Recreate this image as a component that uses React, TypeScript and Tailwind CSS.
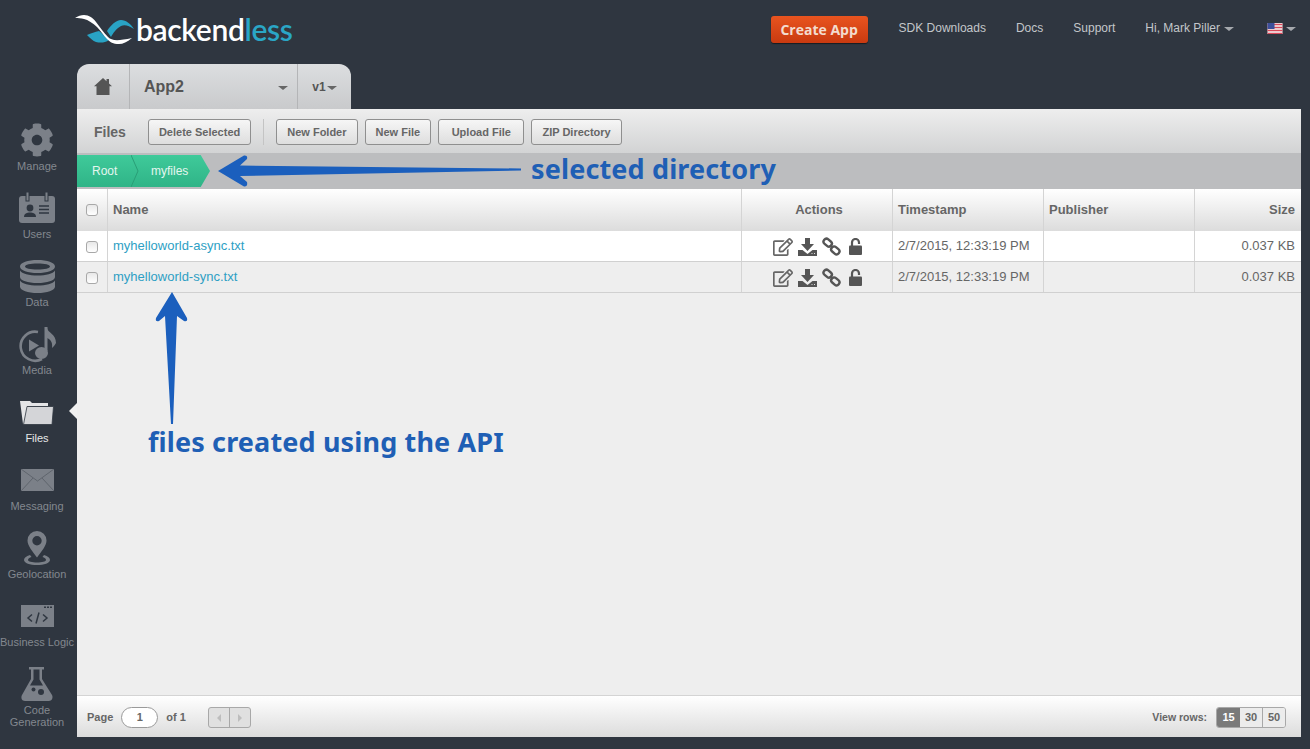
import React from "react";
import { FaCog, FaRegEdit } from "react-icons/fa";

const Caret = ({ className = "" }: { className?: string }) => (
  <span className={"inline-block w-0 h-0 border-x-[5px] border-x-transparent border-t-[4.5px] " + className} />
);

const iconColor = "#7b8088";
const bgDark = "#2f3640";

function UsersIcon() {
  return (
    <svg width="36" height="32" viewBox="0 0 36 32">
      <rect x="0" y="4" width="36" height="27" rx="3" fill={iconColor} />
      <rect x="7" y="0" width="3" height="9" fill={iconColor} stroke={bgDark} strokeWidth="1" />
      <rect x="26" y="0" width="3" height="9" fill={iconColor} stroke={bgDark} strokeWidth="1" />
      <circle cx="11" cy="16" r="3.4" fill={bgDark} />
      <path d="M5 25c0-3.500 3-4.500 6-4.500s6 1 6 4.500z" fill={bgDark} />
      <path d="M20 14h10M20 17.500h10M20 21h10" stroke={bgDark} strokeWidth="1.500" />
    </svg>
  );
}

function DataIcon() {
  return (
    <svg width="35" height="33" viewBox="0 0 35 33">
      <path fillRule="evenodd" d="M17.500 0C27 0 35 2.500 35 6.500S27 13 17.500 13 0 10.500 0 6.500 8 0 17.500 0zm0 3.500C10 3.500 5 4.800 5 6.500s5 3 12.500 3S30 8.200 30 6.500s-5-3-12.500-3z" fill={iconColor} />
      <path d="M0 10.500C2 14 9 15.500 17.500 15.500S33 14 35 10.500V17c0 3.500-8 6-17.500 6S0 20.500 0 17z" fill={iconColor} />
      <path d="M0 20.500C2 24 9 25.500 17.500 25.500S33 24 35 20.500V26.500c0 4-8 6.500-17.500 6.500S0 30.500 0 26.500z" fill={iconColor} />
    </svg>
  );
}

function MediaIcon() {
  return (
    <svg width="38" height="37" viewBox="0 0 38 37" fill="none">
      <path d="M20 6A14.500 14.500 0 1 0 24 33" stroke={iconColor} strokeWidth="2.600" />
      <path d="M11 13.500v12l10-6z" fill={iconColor} />
      <path d="M28 1v24" stroke={iconColor} strokeWidth="3" />
      <ellipse cx="23.500" cy="27" rx="6.500" ry="6" fill={iconColor} />
      <path d="M29 2c1 5 9 6 9 15-1 2-2 3-4 5 1-6-2-9-5-10z" fill={iconColor} />
    </svg>
  );
}

function FolderIcon() {
  return (
    <svg width="34" height="25" viewBox="0 0 34 25">
      <path d="M0 1h10l2 2h16v3H7.500L5 24H3z" fill="#e4e5e7" />
      <path d="M7 6.500h26.500L32 24.500H3.500z" fill="#d4d5d8" stroke={bgDark} strokeWidth="0.800" />
    </svg>
  );
}

function MailIcon() {
  return (
    <svg width="33" height="22" viewBox="0 0 33 22">
      <rect width="33" height="22" fill={iconColor} />
      <path d="M0 0l16.500 12L33 0M0 22l12-13M33 22L21 9" fill="none" stroke="#5b616a" strokeWidth="0.900" />
    </svg>
  );
}

function PinIcon() {
  return (
    <svg width="26" height="34" viewBox="0 0 26 34">
      <path fillRule="evenodd" d="M13 0a9.500 9.500 0 0 1 9.500 9.500c0 5-5 11-9.500 17-4.500-6-9.500-12-9.500-17A9.500 9.500 0 0 1 13 0zm0 5a4.700 4.700 0 1 0 0 9.400A4.700 4.700 0 0 0 13 5z" fill={iconColor} />
      <path d="M6 24c-4 1-6 3-6 5 0 3 6 5 13 5s13-2 13-5c0-2-2-4-6-5l-1.500 2c2 .5 3.500 1.500 3.500 3 0 1.500-4 2.500-9 2.500s-9-1-9-2.500c0-1.500 1.500-2.500 3.500-3z" fill={iconColor} />
    </svg>
  );
}

function LogicIcon() {
  return (
    <svg width="33" height="22" viewBox="0 0 33 22">
      <rect width="33" height="22" fill={iconColor} />
      <rect x="23" y="1.500" width="2" height="1.500" fill={bgDark} />
      <rect x="26" y="1.500" width="2" height="1.500" fill={bgDark} />
      <rect x="29" y="1.500" width="2" height="1.500" fill={bgDark} />
      <path d="M11 9.500l-4 3.500 4 3.500M22 9.500l4 3.500-4 3.500M18 7.500l-3 11" fill="none" stroke={bgDark} strokeWidth="1.500" />
    </svg>
  );
}

function FlaskIcon() {
  return (
    <svg width="34" height="34" viewBox="0 0 34 34">
      <path fillRule="evenodd" d="M9 0h15v2.500h-2V12l10 16c1.500 3-.5 6-3 6H5c-3 0-4.500-3-3-6l9-16V2.500H9zM13.500 2.500v10l-3.500 6h13l-3.500-6v-10z" fill={iconColor} />
      <circle cx="21" cy="25" r="3" fill={bgDark} />
      <circle cx="13.500" cy="22.500" r="2" fill={bgDark} />
    </svg>
  );
}

function HomeIcon() {
  return (
    <svg width="18" height="17" viewBox="0 0 18 17">
      <path d="M9 0l3.500 3.200V1h2.500v4.500L18 8.300h-2.500V17H2.500V8.300H0z" fill="#555" />
    </svg>
  );
}

function DownloadIcon() {
  return (
    <svg width="19" height="18" viewBox="0 0 19 18">
      <path d="M7 0h5v6h4l-6.500 7L3 6h4z" fill="#555" />
      <path d="M0 12h4.500l5 4 5-4H19v6H0z" fill="#555" />
      <path d="M13.500 15.500h1M16 15.500h1" stroke="#ddd" strokeWidth="1" />
    </svg>
  );
}

function ChainIcon() {
  return (
    <svg width="19" height="19" viewBox="0 0 19 19" fill="none" stroke="#555" strokeWidth="2.400">
      <rect x="1.200" y="2.800" width="9" height="5.800" rx="2.900" transform="rotate(40 5.700 5.700)" />
      <rect x="8.800" y="10.400" width="9" height="5.800" rx="2.900" transform="rotate(40 13.300 13.300)" />
      <path d="M8 8l3 3" />
    </svg>
  );
}

function LockIcon() {
  return (
    <svg width="13" height="17" viewBox="0 0 13 17">
      <path d="M3 8V4.500a3.500 3.500 0 0 1 7 0V6" fill="none" stroke="#555" strokeWidth="2.200" />
      <rect x="0" y="7.500" width="13" height="9.500" rx="1" fill="#555" />
    </svg>
  );
}

const navItems: { label: React.ReactNode; icon: React.ReactNode; active?: boolean }[] = [
  { label: "Manage", icon: <FaCog size={34} color={iconColor} /> },
  { label: "Users", icon: <UsersIcon /> },
  { label: "Data", icon: <DataIcon /> },
  { label: "Media", icon: <MediaIcon /> },
  { label: "Files", icon: <FolderIcon />, active: true },
  { label: "Messaging", icon: <MailIcon /> },
  { label: "Geolocation", icon: <PinIcon /> },
  { label: "Business Logic", icon: <LogicIcon /> },
  { label: <>Code<br />Generation</>, icon: <FlaskIcon /> },
];

const rows = [
  { name: "myhelloworld-async.txt", bg: "bg-white" },
  { name: "myhelloworld-sync.txt", bg: "bg-[#eeeeee]" },
];

const gridCols = "grid grid-cols-[31px_634px_151px_151px_151px_1fr]";

function ToolButton({ children, className = "px-[10px]" }: { children: React.ReactNode; className?: string }) {
  return (
    <button className={"h-[26px] rounded-[3px] border border-[#8f8f8f] bg-linear-to-b from-[#f6f6f6] to-[#dedede] text-[11px] font-bold text-[#666] whitespace-nowrap " + className}>
      {children}
    </button>
  );
}

function Checkbox() {
  return <span className="block w-3 h-3 rounded-[3px] border border-[#a8a8a8] bg-linear-to-b from-[#e8e8e8] to-white" />;
}

function HeadCell({ children, className = "" }: { children?: React.ReactNode; className?: string }) {
  return (
    <div className={"flex items-center h-full border-r border-[#d4d4d4] text-[13px] font-bold text-[#666] " + className}>
      {children}
    </div>
  );
}

function Logo() {
  return (
    <div className="flex items-center ml-[75px] mt-[-6px] h-[32px]">
      <svg width="59" height="31" viewBox="0 0 59 31" className="shrink-0">
        <path d="M12 21C16 19 20 18 24 17C27 19 30 23 34 26C30 29 25 29 21 28C18 27 15 24 12 21z" fill="#29a3c4" />
        <path d="M32 17C36 11 41 6 46 6C51 6 56 10 59 15C54 12 50 10 46 12C42 14 38 19 36 23z" fill="#29a3c4" />
        <path d="M0 4C3 2 6 1 9 1C14 1 18 4 21 8C25 13 29 19 33 23C37 27 43 27 57 24C52 28 48 30 44 30C38 30 35 28 32 25C28 21 26 17 22 13C18 9 13 6 9 5C6 4 3 4 0 4z" fill="#ffffff" />
      </svg>
      <span className="text-[30px] leading-none tracking-[-0.35px] font-semibold ml-[2px] [font-family:'Lato',sans-serif]">
        <span className="text-white">backend</span>
        <span className="text-[#2aa6c6]">less</span>
      </span>
    </div>
  );
}

export default function App() {
  return (
    <div className="relative w-[1310px] h-[749px] overflow-hidden bg-[#2f3640] flex flex-col text-[#666] [font-family:'Liberation_Sans',Arial,sans-serif]">
      {/* Header */}
      <header className="h-[64px] shrink-0 flex items-center">
        <Logo />
        <div className="ml-auto flex items-center pr-[14px] mt-[-8px] text-[12px] text-[#c3c6ca]">
          <a className="h-[27px] w-[97px] mt-[2px] flex items-center justify-center rounded-[3px] bg-linear-to-b from-[#e9541f] to-[#c93a10] shadow-[0_1px_1px_rgba(0,0,0,0.5)] text-[14px] font-bold text-[#f3dccf] [font-family:'Open_Sans',sans-serif] mr-[31px]">
            Create App
          </a>
          <span className="mr-[30px]">SDK Downloads</span>
          <span className="mr-[30px]">Docs</span>
          <span className="mr-[30px]">Support</span>
          <span className="mr-[33px] flex items-center gap-[4px]">
            Hi, Mark Piller <Caret className="border-t-[#a6a9ae] mt-[2px]" />
          </span>
          <span className="flex items-center gap-[3px]">
            <svg width="16" height="11" viewBox="0 0 15 11">
              <rect width="15" height="11" fill="#f4f4f4" />
              <path d="M0 1.500h15M0 4.500h15M0 7.500h15M0 10.300h15" stroke="#d8495a" strokeWidth="1.300" />
              <rect width="7" height="6" fill="#3c4f9a" />
            </svg>
            <Caret className="border-t-[#a6a9ae] mt-[2px]" />
          </span>
        </div>
      </header>

      {/* App tabs */}
      <div className="h-[45px] shrink-0 ml-[77px] w-[274px] flex rounded-t-[12px] bg-linear-to-b from-[#dcdee0] to-[#c9cacc] text-[#555]">
        <div className="w-[53px] flex items-center justify-center border-r border-[#b4b5b7]">
          <HomeIcon />
        </div>
        <div className="w-[168px] flex items-center justify-between pl-[14px] pr-[9px] border-r border-[#b4b5b7]">
          <span className="text-[16px] font-bold">App2</span>
          <Caret className="border-t-[#666] mt-[2px]" />
        </div>
        <div className="flex-1 flex items-center justify-center gap-[1px] text-[12px] font-bold">
          v1 <Caret className="border-t-[#666] mt-[2px]" />
        </div>
      </div>

      <div className="flex-1 flex min-h-0">
        {/* Sidebar */}
        <nav className="w-[77px] shrink-0 pt-[11px] pr-[3px] flex flex-col">
          {navItems.map((item, i) => (
            <div key={i} className="relative h-[68px] shrink-0 flex flex-col items-center">
              <div className="h-[40px] flex items-center justify-center">{item.icon}</div>
              <div className={"text-center whitespace-nowrap text-[11px] leading-[12px] " + (item.active ? "text-[#e6e7e9]" : "text-[#83888f]")}>
                {item.label}
              </div>
              {item.active && (
                <span className="absolute right-[-3px] top-[11px] w-0 h-0 border-y-[8px] border-y-transparent border-r-[8px] border-r-[#f0f0f0]" />
              )}
            </div>
          ))}
        </nav>

        {/* Panel */}
        <main className="w-[1224px] h-[628px] flex flex-col bg-[#eeeeee]">
          <div className="h-[44px] shrink-0 flex items-center pl-[17px] pt-[2px] bg-linear-to-b from-[#eeeeee] to-[#d2d3d4]">
            <span className="text-[14px] font-bold text-[#666] mr-[22px]">Files</span>
            <ToolButton>Delete Selected</ToolButton>
            <span className="w-px h-[26px] bg-[#c4c4c4] mx-[12px]" />
            <div className="flex gap-[7px]">
              <ToolButton>New Folder</ToolButton>
              <ToolButton>New File</ToolButton>
              <ToolButton className="px-[12.5px]">Upload File</ToolButton>
              <ToolButton>ZIP Directory</ToolButton>
            </div>
          </div>

          <div className="h-[36px] shrink-0 bg-[#bcbdbf] pt-[2px] pb-[2px] flex">
            <div className="h-[32px] w-[133px] bg-linear-to-b from-[#3fca9a] to-[#2fb487] [clip-path:polygon(0_0,93%_0,100%_50%,93%_100%,0_100%)] flex items-center text-[12px] text-[#e4f6ef] relative">
              <span className="pl-[15px] w-[56px]">Root</span>
              <span className="pl-[18px]">myfiles</span>
              <svg className="absolute left-[54px] top-0" width="10" height="32" viewBox="0 0 10 32" fill="none">
                <path d="M0 0l7 16-7 16" stroke="#2a9e77" strokeWidth="1" />
              </svg>
            </div>
          </div>

          <div className={gridCols + " h-[42px] shrink-0 items-center bg-linear-to-b from-white to-[#dcdcdc]"}>
            <HeadCell className="justify-center"><Checkbox /></HeadCell>
            <HeadCell className="pl-[5px]">Name</HeadCell>
            <HeadCell className="justify-center pl-[4px]">Actions</HeadCell>
            <HeadCell className="pl-[5px]">Timestamp</HeadCell>
            <HeadCell className="pl-[5px]">Publisher</HeadCell>
            <div className="pr-[6px] text-right text-[13px] font-bold text-[#666]">Size</div>
          </div>

          {rows.map((r) => (
            <div key={r.name} className={gridCols + " h-[31px] shrink-0 items-center border-b border-[#d0d0d0] text-[13px] text-[#666] " + r.bg}>
              <div className="h-full flex items-center justify-center border-r border-[#d4d4d4] pt-[2px]"><Checkbox /></div>
              <div className="h-full flex items-center pl-[5px] border-r border-[#d4d4d4] text-[#2e9fc4]">{r.name}</div>
              <div className="h-full flex items-center justify-center gap-[5px] border-r border-[#d4d4d4] pt-[1px] pl-[1px]">
                <FaRegEdit size={20} color="#666" />
                <DownloadIcon />
                <ChainIcon />
                <span className="ml-[3px]"><LockIcon /></span>
              </div>
              <div className="h-full flex items-center pl-[5px] border-r border-[#d4d4d4]">2/7/2015, 12:33:19 PM</div>
              <div className="h-full border-r border-[#d4d4d4]" />
              <div className="pr-[6px] text-right">0.037 KB</div>
            </div>
          ))}

          <div className="flex-1" />

          <div className="h-[42px] shrink-0 flex items-center pt-[2px] border-t border-[#d4d4d4] bg-linear-to-b from-white to-[#dcdcdc] pl-[10px] pr-[15px] text-[11px] font-bold text-[#666]">
            <span>Page</span>
            <span className="ml-[8px] w-[37px] h-[21px] rounded-full border border-[#9a9a9a] bg-white flex items-center justify-center">1</span>
            <span className="ml-[8px]">of 1</span>
            <div className="ml-[22px] h-[21px] w-[43px] flex rounded-[3px] border border-[#a8a8a8] bg-[#e0e0e0]">
              <span className="flex-1 flex items-center justify-center border-r border-[#a8a8a8]">
                <span className="w-0 h-0 border-y-[4px] border-y-transparent border-r-[4px] border-r-[#bdbdbd]" />
              </span>
              <span className="flex-1 flex items-center justify-center">
                <span className="w-0 h-0 border-y-[4px] border-y-transparent border-l-[4px] border-l-[#bdbdbd]" />
              </span>
            </div>
            <span className="ml-auto mr-[9px] text-[10.5px]">View rows:</span>
            <div className="flex h-[21px] rounded-[3px] border border-[#a8a8a8] overflow-hidden text-[11px]">
              <span className="w-[23px] flex items-center justify-center bg-[#7a7a7a] text-white">15</span>
              <span className="w-[23px] flex items-center justify-center bg-[#ececec] border-r border-[#a8a8a8]">30</span>
              <span className="w-[22px] flex items-center justify-center bg-[#ececec]">50</span>
            </div>
          </div>
        </main>
      </div>

      {/* Annotations drawn on top of the screenshot */}
      <svg className="absolute inset-0 pointer-events-none" width="1310" height="749" viewBox="0 0 1310 749">
        <path d="M218 171L244 155.500Q248 155 247 159L240 165.500L521 168.500V170.500L240 176L247 182Q248 187 244 186.500z" fill="#1b5fbd" />
        <path d="M172 292L187 318Q188 322 184 321L177 316L173 424H171L165 316L159 321Q155 322 156 318z" fill="#1b5fbd" />
      </svg>
      <span className="absolute left-[531px] top-[150px] text-[27px] leading-[38px] font-bold tracking-[0.14px] text-[#1f5fb5] [font-family:'Noto_Sans',sans-serif] whitespace-nowrap">
        selected directory
      </span>
      <span className="absolute left-[148px] top-[423px] text-[27px] leading-[38px] font-bold tracking-[0.14px] text-[#1f5fb5] [font-family:'Noto_Sans',sans-serif] whitespace-nowrap">
        files created using the API
      </span>
    </div>
  );
}
